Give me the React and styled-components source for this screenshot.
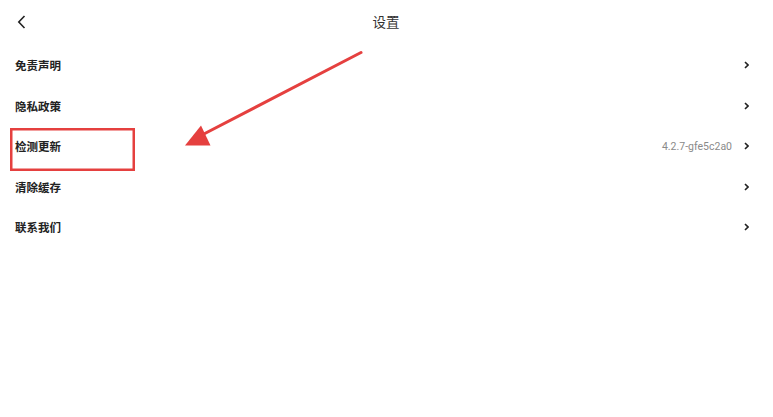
import React from "react";
import styled, { createGlobalStyle } from "styled-components";

const GlobalStyle = createGlobalStyle`
    html, body {
        margin: 0;
        padding: 0;
        background: #ffffff;
    }
    body {
        font-family: "Noto Sans CJK SC", "Noto Sans", sans-serif;
        color: #222222;
    }
`;

const Page = styled.div`
    position: relative;
    width: 773px;
    height: 417px;
    background: #ffffff;
    overflow: hidden;
`;

const Header = styled.div`
    position: relative;
    height: 45px;
    display: flex;
    align-items: center;
    justify-content: center;
`;

const BackButton = styled.div`
    position: absolute;
    left: 15px;
    top: 13px;
    width: 12px;
    height: 18px;
    display: flex;
    align-items: center;
    justify-content: center;
`;

const Title = styled.div`
    font-size: 13.5px;
    color: #333333;
    margin-right: 1px;
    margin-top: -3px;
`;

const List = styled.div`
    display: flex;
    flex-direction: column;
`;

const Row = styled.div`
    height: 40.5px;
    display: flex;
    align-items: center;
    padding: 0 24px 0 15px;
`;

const Label = styled.div`
    flex: 1;
    font-size: 11.5px;
    font-weight: 700;
    color: #222222;
`;

const Value = styled.div`
    font-family: Roboto, "Noto Sans", sans-serif;
    font-size: 10.5px;
    color: #8a8a8a;
    margin-right: 12px;
`;

const Overlay = styled.svg`
    position: absolute;
    left: 0;
    top: 0;
    pointer-events: none;
`;

const Chevron = () => (
    <svg width="5" height="8" viewBox="0 0 5 8">
        <path
            d="M1 1 L4 4 L1 7"
            fill="none"
            stroke="#222"
            strokeWidth="1.6"
        />
    </svg>
);

const items = [
    { id: 1, label: "免责声明" },
    { id: 2, label: "隐私政策" },
    { id: 3, label: "检测更新", value: "4.2.7-gfe5c2a0" },
    { id: 4, label: "清除缓存" },
    { id: 5, label: "联系我们" },
];

function App() {
    return (
        <Page>
            <GlobalStyle />
            <Header>
                <BackButton>
                    <svg width="9" height="14" viewBox="0 0 9 14">
                        <path
                            d="M7.5 1 L1.8 7 L7.5 13"
                            fill="none"
                            stroke="#222"
                            strokeWidth="1.6"
                        />
                    </svg>
                </BackButton>
                <Title>设置</Title>
            </Header>
            <List>
                {items.map((item) => (
                    <Row key={item.id}>
                        <Label>{item.label}</Label>
                        {item.value && <Value>{item.value}</Value>}
                        <Chevron />
                    </Row>
                ))}
            </List>

            {/* red annotation */}
            <Overlay width="773" height="417" viewBox="0 0 773 417">
                <rect
                    x="11.25"
                    y="129.25"
                    width="122.5"
                    height="40.5"
                    fill="none"
                    stroke="#e5403f"
                    strokeWidth="2.5"
                />
                <line
                    x1="361"
                    y1="52.5"
                    x2="200"
                    y2="136"
                    stroke="#e5403f"
                    strokeWidth="3"
                    strokeLinecap="round"
                />
                <polygon points="185,145.5 201,125.5 210.5,145.5" fill="#e5403f" />
            </Overlay>
        </Page>
    );
}

export default App;
